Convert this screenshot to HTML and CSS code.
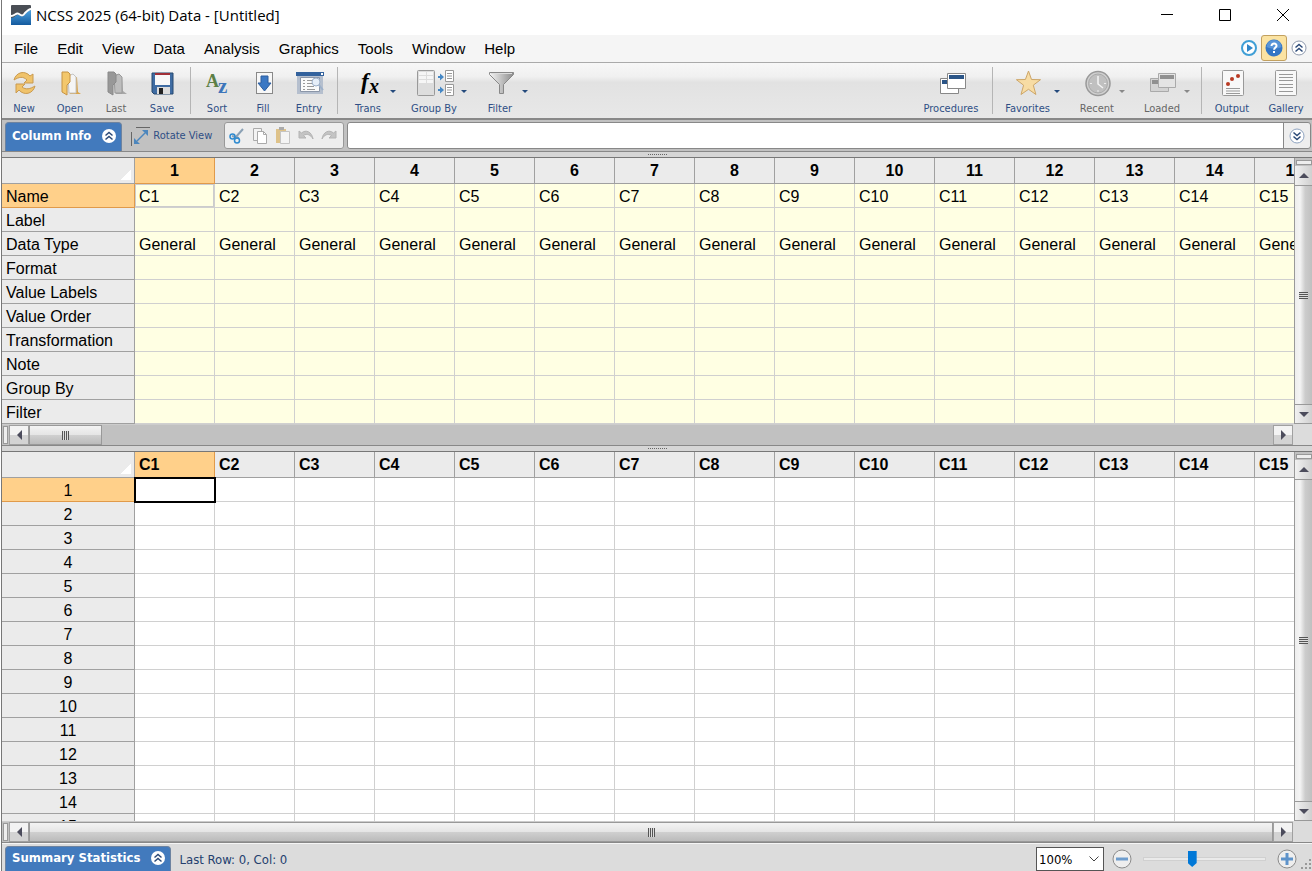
FILE: index.html
```html
<!DOCTYPE html>
<html lang="en">
<head>
	<meta charset="utf-8">
	<title>NCSS 2025 (64-bit) Data - [Untitled]</title>
	<link rel="stylesheet" href="styles.css">
</head>
<body>
	<div class="window">
		<header class="titlebar">
			<svg class="logo" width="20" height="20" viewBox="0 0 20 20">
				<defs><linearGradient id="sea" x1="0" y1="0" x2="0" y2="1"><stop offset="0" stop-color="#4fa3e0"/><stop offset="1" stop-color="#145a9e"/></linearGradient></defs>
				<rect width="20" height="20" rx="1" fill="#4a4e55"/>
				<path d="M0 13c4 0 5-4 8-3 3 2 4 2 6-1 2-2 4-4 6-4v15H0z" fill="url(#sea)"/>
				<path d="M0 11c4 0 5-4 8-2 3 2 4 2 6-1 2-2 4-4 6-4" fill="none" stroke="#fff" stroke-width="2"/>
			</svg>
			<h1>NCSS 2025 (64-bit) Data - [Untitled]</h1>
			<div class="window-buttons">
				<button aria-label="Minimize"><svg width="12" height="12"><path d="M0 5.500h12" stroke="#000"/></svg></button>
				<button aria-label="Maximize"><svg width="12" height="12"><path d="M.5.5h11v11H.5z" fill="none" stroke="#000"/></svg></button>
				<button aria-label="Close"><svg width="12" height="12"><path d="M0 0l12 12M12 0L0 12" stroke="#000"/></svg></button>
			</div>
		</header>

		<nav class="menubar">
			<button>File</button>
			<button>Edit</button>
			<button>View</button>
			<button>Data</button>
			<button>Analysis</button>
			<button>Graphics</button>
			<button>Tools</button>
			<button>Window</button>
			<button>Help</button>
			<div class="menu-icons">
				<button aria-label="Play"><svg width="16" height="16"><circle cx="8" cy="8" r="7" fill="#fff" stroke="#409fd6" stroke-width="2"/><path d="M6 4l6 4-6 4z" fill="#3186c8"/></svg></button>
				<button class="help" aria-label="Help topics"><svg width="18" height="18"><circle cx="9" cy="9" r="8.500" fill="#3476c4"/><path d="M1.500 8a7.500 7 0 0 1 15 0c-4 2-11 2-15 0z" fill="#5794d8"/><path d="M6.500 7c0-3.500 5.500-3 5 0-.3 1.600-2.400 1.600-2.400 3.800M9 12v2" fill="none" stroke="#fff" stroke-width="2"/></svg></button>
				<button aria-label="Hide ribbon"><svg width="16" height="16"><circle cx="8" cy="8" r="7" fill="#fff" stroke="#8e99ad"/><path d="M4.500 7.500L8 4.500l3.500 3M4.500 11.500L8 8.500l3.500 3" fill="none" stroke="#2c4a78" stroke-width="1.500"/></svg></button>
			</div>
		</nav>

		<div class="toolbar">
			<div class="group">
				<button class="tool">
					<svg width="32" height="32" viewBox="0 0 32 32"><path d="M6 13C8 5 17 3 22 9l3-2v9h-9l3-3c-4-4-8-3-13 0z" fill="#f0c36b" stroke="#c99a50"/><path d="M27 19c-2 8-11 10-16 4l-3 3v-9h9l-3 3c4 3 8 2 13-1z" fill="#f0c36b" stroke="#c99a50"/></svg>
					<span>New</span>
				</button>
				<button class="tool">
					<svg width="32" height="32" viewBox="0 0 32 32"><path d="M15 12l8-2 1 15 3 2H16z" fill="#d9a54c"/><path d="M14 9l5-2 3 3v16h-7z" fill="#f5f5f5" stroke="#c4c4c4"/><path d="M8 5h6l2 2v8l-3 3v10l-5-3z" fill="#f3c76c" stroke="#c69344"/></svg>
					<span>Open</span>
				</button>
				<button class="tool off">
					<svg width="32" height="32" viewBox="0 0 32 32"><path d="M15 12l7-2 1 14 4 3H16z" fill="#a7a7a7"/><path d="M14 9l5-2 3 3v16h-7z" fill="#bdbdbd" stroke="#999"/><path d="M8 5h6l2 2v8l-3 3v10l-5-3z" fill="#989898" stroke="#8a8a8a"/></svg>
					<span>Last</span>
				</button>
				<button class="tool">
					<svg width="32" height="32" viewBox="0 0 32 32"><path d="M6 6h21v21H8l-2-2z" fill="#3f6ca3" stroke="#27486f"/><path d="M9 7h15v11H9z" fill="#f8f8f8"/><path d="M9 6h15v2H9z" fill="#a13038"/><path d="M11 20h13v7H11z" fill="#ddd"/><path d="M13 21h4v6h-4z" fill="#222"/></svg>
					<span>Save</span>
				</button>
			</div>
			<div class="group">
				<button class="tool">
					<svg width="32" height="32" viewBox="0 0 32 32"><text class="glyph green" x="5" y="20" font-size="18">A</text><text class="glyph blue" x="17" y="26" font-size="21">z</text></svg>
					<span>Sort</span>
				</button>
				<button class="tool">
					<svg width="32" height="32" viewBox="0 0 32 32"><rect x="9.500" y="5.500" width="16" height="21" fill="#f7f7f7" stroke="#888"/><path d="M14 9h7v7h3l-6.500 8L11 16h3z" fill="#3b78c4" stroke="#2c5d9e"/></svg>
					<span>Fill</span>
				</button>
				<button class="tool">
					<svg width="32" height="32" viewBox="0 0 32 32"><path d="M4 5h26v22H4z" fill="#b5bfce"/><path d="M3 5h28v4H3z" fill="#33629d"/><path d="M28 6h2v2h-2z" fill="#fff"/><path d="M7.500 10.500h19v14h-19z" fill="#fafafa" stroke="#8b96a8"/><path d="M10 13.500h2M14 13.500h5M10 16.500h2M14 16.500h5M10 19.500h2M14 19.500h7M10 22.500h2M14 22.500h8" stroke="#999"/><circle cx="23" cy="15" r="4" fill="#e6eef8" stroke="#9db0c9"/><path d="M26 18l4 5" stroke="#9db0c9" stroke-width="2"/></svg>
					<span>Entry</span>
				</button>
			</div>
			<div class="group splits">
				<button class="tool split">
					<svg width="32" height="32" viewBox="0 0 32 32"><text class="glyph fx" x="9" y="22" font-size="23">f</text><text class="glyph fx" x="17" y="26" font-size="20">x</text></svg>
					<span>Trans</span><i class="arrow"></i>
				</button>
				<button class="tool split">
					<svg width="40" height="32" viewBox="0 0 40 32"><rect x="3.500" y="3.500" width="17" height="25" rx="1" fill="#ddd" stroke="#999"/><path d="M5 5h14v11H5z" fill="#f6f6f6"/><path d="M5 8.500h14M5 12.500h14M12.500 5v11" stroke="#ddd"/><path d="M24 9h2V6.500l4 3.500-4 3.500V11h-2zM24 22h2v-2.500l4 3.500-4 3.500V24h-2z" fill="#4588c6"/><path d="M31.500 3.500h8v11h-8zM31.500 17.500h8v11h-8z" fill="#fff" stroke="#999"/><path d="M33 6.500h5M33 9h5M33 11.500h5M33 20.500h5M33 23h5M33 25.500h4" stroke="#999"/></svg>
					<span>Group By</span><i class="arrow"></i>
				</button>
				<button class="tool split">
					<svg width="32" height="32" viewBox="0 0 32 32"><defs><linearGradient id="metal"><stop offset="0" stop-color="#f5f5f5"/><stop offset="1" stop-color="#8c8c8c"/></linearGradient></defs><path d="M5.500 5.500h24v2l-10 10v9h-4v-9l-10-10z" fill="url(#metal)" stroke="#888"/><path d="M7 6.500h21" stroke="#ddd"/></svg>
					<span>Filter</span><i class="arrow"></i>
				</button>
			</div>
			<div class="group push">
				<button class="tool">
					<svg width="32" height="32" viewBox="0 0 32 32"><path d="M5.500 11.500h18v15h-18z" fill="#fff" stroke="#888"/><path d="M7 13h15v4H7z" fill="#2b5587"/><path d="M12.500 6.500h18v15h-18z" fill="#fff" stroke="#888"/><path d="M14 8h15v4H14z" fill="#2b5587"/></svg>
					<span>Procedures</span>
				</button>
			</div>
			<div class="group splits wide">
				<button class="tool split">
					<svg width="32" height="32" viewBox="0 0 32 32"><path d="M16.500 4l3 8.500 9 .2-7.200 5.500 2.600 9.300-7.400-5.200L9 27.500l2.600-9.300-7.200-5.500 9-.2z" fill="#f7dca4" stroke="#cda668"/></svg>
					<span>Favorites</span><i class="arrow"></i>
				</button>
				<button class="tool split off">
					<svg width="32" height="32" viewBox="0 0 32 32"><circle cx="17" cy="16.500" r="12" fill="#d0d0d0" stroke="#999" stroke-width="1.500"/><circle cx="17" cy="16.500" r="9.500" fill="#c0c0c0" stroke="#aaa"/><path d="M17 9v8l5 4" fill="none" stroke="#f5f5f5" stroke-width="1.500"/><path d="M9 16.500h2M23 16.500h2M17 23v2" stroke="#eee"/></svg>
					<span>Recent</span><i class="arrow"></i>
				</button>
				<button class="tool split off">
					<svg width="32" height="32" viewBox="0 0 32 32"><path d="M4.500 11.500h18v13h-18z" fill="#d3d3d3" stroke="#aaa"/><path d="M6 13h15v4H6z" fill="#909090"/><path d="M12.500 6.500h17v14h-17z" fill="#e4e4e4" stroke="#aaa"/><path d="M14 8h14v4H14z" fill="#909090"/></svg>
					<span>Loaded</span><i class="arrow"></i>
				</button>
			</div>
			<div class="group outputs">
				<button class="tool">
					<svg width="32" height="32" viewBox="0 0 32 32"><rect x="6.500" y="3.500" width="21" height="25" rx="1" fill="#f8f8f8" stroke="#999"/><path d="M10 21.500h14M10 24h14M10 26.500h14" stroke="#999"/><g fill="#b93a24"><circle cx="12" cy="17" r="2"/><circle cx="16" cy="12" r="2"/><circle cx="22" cy="9" r="2"/></g></svg>
					<span>Output</span>
				</button>
				<button class="tool">
					<svg width="32" height="32" viewBox="0 0 32 32"><rect x="5.500" y="3.500" width="21" height="25" rx="1" fill="#f8f8f8" stroke="#999"/><path d="M9 7.500h14M9 10.500h14M9 13.500h14M9 17.500h14M9 20.500h14M9 24.500h14" stroke="#999"/></svg>
					<span>Gallery</span>
				</button>
			</div>
		</div>

		<div class="editbar">
			<button class="tab">Column Info
				<svg width="14" height="14"><circle cx="7" cy="7" r="7" fill="#fff"/><path d="M3.500 6.500L7 3.500l3.500 3M3.500 10.500L7 7.500l3.500 3" fill="none" stroke="#2c4a78" stroke-width="1.500"/></svg>
			</button>
			<button class="rotate">
				<svg width="20" height="20"><path d="M1.500 6v14M6 1.500h14" stroke="#666"/><path d="M7 15l8-8" stroke="#4c86bd" stroke-width="1.500"/><path d="M12 4h6v6zM4 12v6h6z" fill="#4c86bd"/></svg>
				Rotate View
			</button>
			<div class="edit-tools">
				<button aria-label="Cut"><svg width="16" height="16"><path d="M14 1L6 10M3 8l7 2" stroke="#8ba1b5" stroke-width="2"/><circle cx="3.500" cy="8.500" r="2.500" fill="none" stroke="#2f8bd0" stroke-width="1.500"/><circle cx="8" cy="12.500" r="2.500" fill="none" stroke="#2f8bd0" stroke-width="1.500"/></svg></button>
				<button aria-label="Copy"><svg width="16" height="18"><path d="M1.500 1.500h8v12h-8z" fill="#f3f3f3" stroke="#aaa"/><path d="M5.500 4.500h6l3 3v9h-9z" fill="#fff" stroke="#aaa"/><path d="M11.500 4.500v3h3" fill="none" stroke="#aaa"/></svg></button>
				<button aria-label="Paste"><svg width="16" height="18"><path d="M1 2h10v14H1z" fill="#dec289"/><path d="M4 0h5v3H4z" fill="#aaa"/><path d="M5.500 4.500h9v12h-9z" fill="#f4f4f4" stroke="#c4c4c4"/></svg></button>
				<button aria-label="Undo"><svg width="16" height="14"><path d="M1 2v7h7L5.500 6.500C9 4 13 6 15 10 14 3 8 0 3.500 4z" fill="#c4c4c4" stroke="#b4b4b4"/></svg></button>
				<button aria-label="Redo"><svg width="16" height="14"><path d="M15 2v7H8l2.500-2.500C7 4 3 6 1 10 2 3 8 0 12.500 4z" fill="#c4c4c4" stroke="#b4b4b4"/></svg></button>
			</div>
			<div class="formula">
				<input type="text" aria-label="Cell contents">
				<button aria-label="Expand"><svg width="16" height="16"><circle cx="8" cy="8" r="7" fill="#fff" stroke="#8ea3c0"/><path d="M4.500 4.500l3.500 3 3.500-3M4.500 8.500l3.500 3 3.500-3" fill="none" stroke="#2c4a78" stroke-width="1.500"/></svg></button>
			</div>
		</div>

		<div class="splitter"></div>

		<section class="pane info-pane">
			<div class="sheet"><table class="grid info" id="info"></table></div>
			<div class="vscroll">
				<span class="handle"></span>
				<button aria-label="Scroll up"><i class="tri up"></i></button>
				<span class="thumb"><i class="grip"></i></span>
				<button aria-label="Scroll down"><i class="tri down"></i></button>
			</div>
			<div class="hscroll short">
				<span class="handle"></span>
				<button aria-label="Scroll left"><i class="tri left"></i></button>
				<span class="thumb"><i class="grip"></i></span>
				<span class="track"></span>
				<button aria-label="Scroll right"><i class="tri right"></i></button>
			</div>
		</section>

		<div class="splitter"></div>

		<section class="pane data-pane">
			<div class="sheet"><table class="grid data" id="data"></table></div>
			<div class="vscroll">
				<span class="handle"></span>
				<button aria-label="Scroll up"><i class="tri up"></i></button>
				<span class="thumb"><i class="grip"></i></span>
				<button aria-label="Scroll down"><i class="tri down"></i></button>
			</div>
			<div class="hscroll">
				<span class="handle"></span>
				<button aria-label="Scroll left"><i class="tri left"></i></button>
				<span class="thumb"><i class="grip"></i></span>
				<button aria-label="Scroll right"><i class="tri right"></i></button>
			</div>
		</section>

		<footer class="statusbar">
			<button class="tab">Summary Statistics
				<svg width="14" height="14"><circle cx="7" cy="7" r="7" fill="#fff"/><path d="M3.500 6.500L7 3.500l3.500 3M3.500 10.500L7 7.500l3.500 3" fill="none" stroke="#2c4a78" stroke-width="1.500"/></svg>
			</button>
			<span class="position">Last Row: 0, Col: 0</span>
			<div class="zoom">
				<div class="zoom-select">
					<select aria-label="Zoom level"><option>100%</option></select>
					<svg width="10" height="6"><path d="M.5.5L5 5 9.500.5" fill="none" stroke="#444"/></svg>
				</div>
				<button aria-label="Zoom out"><svg width="20" height="20"><circle cx="10" cy="10" r="9" fill="#eee" stroke="#8b8b8b"/><path d="M4 8.500h12v3H4z" fill="#6e9dcd"/></svg></button>
				<input type="range" aria-label="Zoom" min="0" max="100" value="39">
				<button aria-label="Zoom in"><svg width="20" height="20"><circle cx="10" cy="10" r="9" fill="#eee" stroke="#8b8b8b"/><path d="M4 8.500h4.500V4h3v4.500H16v3h-4.500V16h-3v-4.500H4z" fill="#5e93ca"/></svg></button>
				<svg class="sizer" width="12" height="12"><path d="M9 0h2v2H9zM5 4h2v2H5zM9 4h2v2H9zM1 8h2v2H1zM5 8h2v2H5zM9 8h2v2H9z" fill="#999"/></svg>
			</div>
		</footer>
	</div>

	<script src="grid.js"></script>
</body>
</html>
```

FILE: styles.css
```css
* {
	box-sizing: border-box;
}
body {
	margin: 0;
	font-family: "Liberation Sans", Arial, sans-serif;
	color: #000;
}
button {
	display: flex;
	align-items: center;
	justify-content: center;
	margin: 0;
	padding: 0;
	border: none;
	background: none;
	font-family: inherit;
	font-size: inherit;
	color: inherit;
}
svg {
	display: block;
	flex: none;
}
.window {
	display: flex;
	flex-direction: column;
	height: 100vh;
	margin-left: 1px;
	border-left: 1px solid #777;
	overflow: hidden;
	background: #dcdcdc;
}

/* title and menu */
.titlebar {
	display: flex;
	align-items: center;
	height: 35px;
	padding: 0 0 5px 9px;
	background: #fff;
}
.titlebar h1 {
	margin: 0 0 0 5px;
	font-family: "Open Sans", sans-serif;
	font-size: 15px;
	font-weight: normal;
}
.window-buttons {
	display: flex;
	margin-left: auto;
}
.window-buttons button {
	width: 58px;
	height: 30px;
}
.menubar {
	display: flex;
	align-items: center;
	gap: 19px;
	height: 28px;
	flex: none;
	padding-left: 12px;
	padding-bottom: 1px;
	border-bottom: 1px solid #aaa;
	background: #f5f5f5;
	font-size: 15px;
}
.menu-icons {
	display: flex;
	align-items: center;
	gap: 4px;
	margin-left: auto;
	padding-right: 5px;
}
.help {
	width: 26px;
	height: 26px;
	border: 1px solid #c2a05f;
	border-radius: 3px;
	background: #fbe3a2;
}

/* toolbar */
.toolbar {
	display: flex;
	flex: none;
	height: 57px;
	padding: 4px 8px 4px 4px;
	border-bottom: 2px solid #888;
	background: linear-gradient(#f7f7f7, #f0f0f0 25%, #e2e2e2 35%, #e8e8e8);
	font-family: "DejaVu Sans Condensed", "DejaVu Sans", sans-serif;
	font-size: 11px;
	color: #2f4f85;
}
.group {
	display: flex;
	gap: 10px;
	padding-right: 10px;
}
.group + .group {
	padding-left: 8px;
	border-left: 1px solid #b5b5b5;
}
.group + .group.push {
	margin-left: auto;
	padding-right: 14px;
	border-left: none;
}
.group.splits {
	gap: 14px;
	padding-left: 12px;
}
.group.wide {
	gap: 18px;
}
.group.outputs {
	gap: 18px;
	padding-left: 12px;
	padding-right: 0;
}
.tool {
	display: grid;
	grid-template-columns: minmax(36px, auto);
	grid-template-rows: 32px 18px;
	align-content: start;
	justify-items: center;
	align-items: center;
}
.tool.split {
	grid-template-columns: minmax(36px, auto) 8px;
	column-gap: 3px;
}
.tool.off {
	color: #666;
}
.arrow {
	grid-column: 2;
	grid-row: 1;
	align-self: end;
	margin-bottom: 6px;
	border: 3px solid transparent;
	border-top-color: #244a7c;
	border-bottom: none;
}
.off .arrow {
	border-top-color: #888;
}
.glyph {
	font-family: "Liberation Serif", serif;
	font-weight: bold;
}
.green {
	fill: #5c7f45;
}
.blue {
	fill: #3d75ba;
}
.fx {
	font-style: italic;
}

/* edit bar */
.editbar {
	display: flex;
	align-items: center;
	flex: none;
	height: 32px;
	padding-left: 3px;
	border-bottom: 1px solid #888;
	background: #c1c1c1;
	font-family: "DejaVu Sans Condensed", "DejaVu Sans", sans-serif;
	font-size: 11px;
}
.tab {
	gap: 11px;
	align-self: stretch;
	margin-top: 2px;
	padding: 0 5px 3px 6px;
	border: 1px solid #6d83a0;
	border-bottom: none;
	border-radius: 4px 4px 0 0;
	background: #427abd;
	font-family: "DejaVu Sans Condensed", "DejaVu Sans", sans-serif;
	font-size: 13px;
	font-weight: bold;
	color: #fff;
}
.rotate {
	gap: 3px;
	margin: 0 12px 0 8px;
	color: #2f4f85;
}
.edit-tools {
	display: flex;
	gap: 7px;
	height: 27px;
	padding: 0 6px 0 4px;
	border: 1px solid #999;
	border-radius: 3px;
	background: #eee;
}
.formula {
	display: flex;
	flex: 1;
	height: 27px;
	margin: 0 1px 0 3px;
	border: 1px solid #888;
	border-radius: 3px;
	background: #eee;
}
.formula input {
	flex: 1;
	border: none;
	border-right: 1px solid #888;
	border-radius: 3px 0 0 3px;
	outline: none;
}
.formula button {
	width: 26px;
}
.splitter {
	flex: none;
	height: 6px;
	border-bottom: 1px solid #777;
	background: #d6d6d6;
}
.splitter::before {
	content: "";
	display: block;
	width: 19px;
	margin: 2px auto 0;
	border-top: 1px dotted #666;
}

/* spreadsheets */
.pane {
	display: grid;
	grid-template-columns: minmax(0, 1fr) 18px;
	grid-template-rows: minmax(0, 1fr) 21px;
	border-bottom: 1px solid #888;
}
.info-pane {
	flex: none;
}
.data-pane {
	flex: 1;
	min-height: 0;
}
.sheet {
	overflow: hidden;
	background: #fff;
}
.grid {
	table-layout: fixed;
	width: 1333px;
	border-collapse: separate;
	border-spacing: 0;
	font-size: 16px;
}
.grid th,
.grid td {
	height: 24px;
	padding: 3px 4px 0;
	border-right: 1px solid #d0d0d0;
	border-bottom: 1px solid #d0d0d0;
	line-height: 18px;
	text-align: left;
	white-space: nowrap;
}
.grid thead th {
	width: 80px;
	height: 26px;
	padding-top: 0;
	border-color: #a0a0a0;
	background: #ebebeb;
}
.grid thead th:first-child {
	width: 133px;
	background: linear-gradient(135deg, transparent 50%, #fff 50%) right 3px bottom 3px / 10px 10px no-repeat, #ebebeb;
}
.grid tbody th {
	border-color: #a0a0a0;
	background: #ebebeb;
	font-weight: normal;
}
.info thead th,
.data tbody th {
	text-align: center;
}
.info td {
	background: #ffffe3;
}
.grid thead .current,
.grid tbody .current {
	border-color: #e09a4a;
	background: #ffd08a;
}
.info .cursor {
	box-shadow: inset 0 0 0 1px #ccc;
}
.data .cursor {
	position: relative;
	outline: 2px solid #000;
	outline-offset: -1px;
}

/* scroll bars */
.vscroll,
.hscroll {
	display: flex;
	background: #c1c1c1;
}
.vscroll {
	flex-direction: column;
	border-left: 1px solid #999;
}
.hscroll {
	margin-right: 1px;
	border-top: 1px solid #ccc;
}
.handle {
	border: 1px solid #999;
	background: #eee;
}
.vscroll .handle {
	height: 5px;
	margin: 2px 0 1px 1px;
}
.hscroll .handle {
	width: 5px;
	margin: 1px 1px 1px 1px;
}
.vscroll button {
	height: 20px;
	border: 1px solid #999;
	border-width: 0 0 1px;
	background: linear-gradient(90deg, #f1f1f1, #d0d0d0);
}
.vscroll button:last-child {
	border-width: 1px 0;
}
.hscroll button {
	width: 20px;
	border: 1px solid #a0a0a0;
	background: linear-gradient(#f3f3f3 50%, #d3d3d3 50%);
}
.thumb {
	display: flex;
	align-items: center;
	justify-content: center;
	flex: 1;
}
.vscroll .thumb {
	background: linear-gradient(90deg, #eee, #f4f4f4 30%, #ccc 60%, #c0c0c0);
}
.hscroll .thumb {
	border: 1px solid #999;
	background: linear-gradient(#f3f3f3, #e5e5e5 48%, #cfcfcf 52%, #bbb);
}
.short .thumb {
	flex: 0 0 73px;
}
.track {
	flex: 1;
}
.grip {
	width: 9px;
	height: 7px;
	background: repeating-linear-gradient(#555 0 1px, #ddd 1px 2px);
}
.hscroll .grip {
	width: 7px;
	height: 9px;
	background: repeating-linear-gradient(90deg, #555 0 1px, #ddd 1px 2px);
}
.tri {
	border: 5px solid transparent;
}
.up {
	border-top: none;
	border-bottom-color: #4c4c5c;
}
.down {
	border-bottom: none;
	border-top-color: #4c4c5c;
}
.left {
	border-left: none;
	border-right-color: #4c4c5c;
}
.right {
	border-right: none;
	border-left-color: #4c4c5c;
}

/* status bar */
.statusbar {
	display: flex;
	align-items: center;
	flex: none;
	height: 28px;
	padding-left: 3px;
	border-top: 1px solid #f5f5f5;
}
.position {
	margin-left: 8px;
	padding-top: 4px;
	font-family: "DejaVu Sans Condensed", "DejaVu Sans", sans-serif;
	font-size: 13px;
	color: #24406e;
}
.zoom {
	display: flex;
	align-items: center;
	align-self: flex-end;
	gap: 8px;
	height: 24px;
	margin-left: auto;
}
.zoom-select {
	display: grid;
	align-items: center;
}
.zoom-select select,
.zoom-select svg {
	grid-area: 1 / 1;
}
.zoom-select select {
	appearance: none;
	width: 68px;
	height: 24px;
	padding: 0 2px;
	border: 1px solid #555;
	border-radius: 0;
	background: #fff;
	font-family: "DejaVu Sans Condensed", "DejaVu Sans", sans-serif;
	font-size: 13px;
}
.zoom-select svg {
	justify-self: end;
	margin-right: 5px;
	pointer-events: none;
}
.zoom input {
	appearance: none;
	width: 123px;
	height: 20px;
	margin: 0 3px;
	background: none;
}
.zoom input::-webkit-slider-runnable-track {
	height: 4px;
	border: 1px solid #d0d0d0;
	background: #eaeaea;
}
.zoom input::-webkit-slider-thumb {
	appearance: none;
	width: 9px;
	height: 16px;
	margin-top: -7px;
	background: #0078d7;
	clip-path: polygon(0 0, 100% 0, 100% 75%, 50% 100%, 0 75%);
}
.sizer {
	align-self: flex-end;
	margin-left: -5px;
}
```

FILE: grid.js
```js
var columns = 15;
var rows = 15;
var properties = ["Name", "Label", "Data Type", "Format", "Value Labels", "Value Order", "Transformation", "Note", "Group By", "Filter"];

function headerRow(prefix) {
	var html = "<thead><tr><th></th>";
	for (var c = 1; c <= columns; c++) {
		html += "<th" + (c == 1 ? " class='current'" : "") + ">" + prefix + c + "</th>";
	}
	return html + "</tr></thead>";
}

function bodyRow(label, row, cellText) {
	var html = "<tr><th" + (row == 0 ? " class='current'" : "") + ">" + label + "</th>";
	for (var c = 1; c <= columns; c++) {
		html += "<td" + (row == 0 && c == 1 ? " class='cursor'" : "") + ">" + cellText(c) + "</td>";
	}
	return html + "</tr>";
}

var info = headerRow("") + "<tbody>";
properties.forEach(function(name, row) {
	info += bodyRow(name, row, function(c) {
		if (name == "Name") return "C" + c;
		if (name == "Data Type") return "General";
		return "";
	});
});
document.getElementById("info").innerHTML = info + "</tbody>";

var data = headerRow("C") + "<tbody>";
for (var r = 0; r < rows; r++) {
	data += bodyRow(r + 1, r, function() { return ""; });
}
document.getElementById("data").innerHTML = data + "</tbody>";
```
